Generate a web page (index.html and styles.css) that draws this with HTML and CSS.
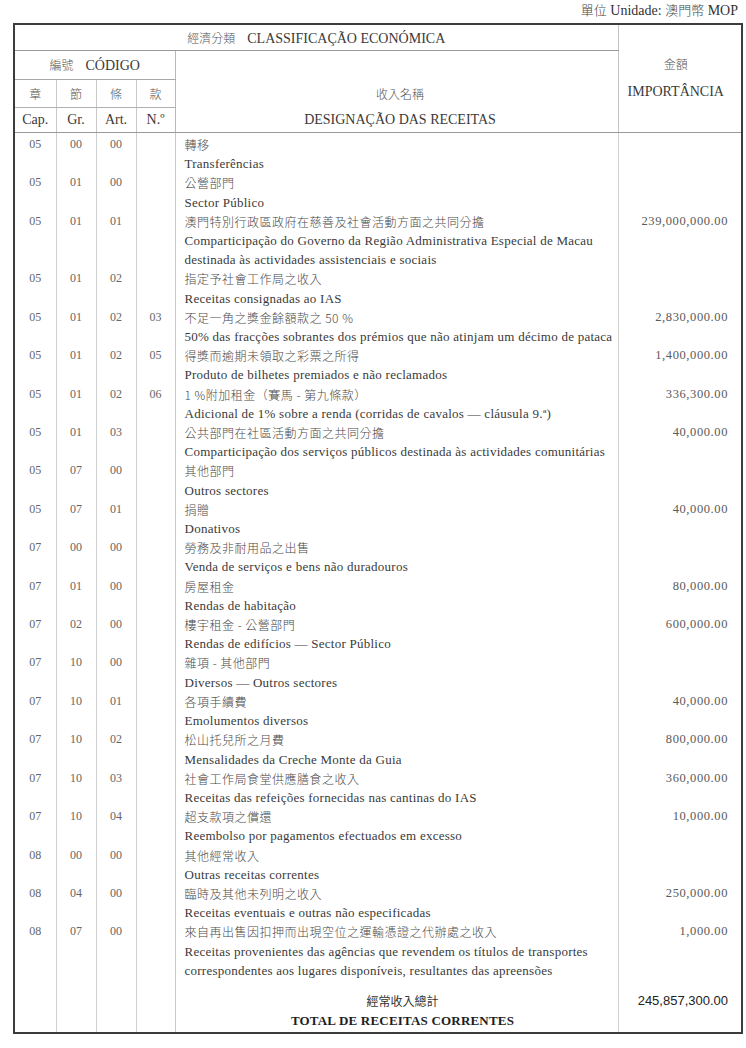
FILE: index.html
```html
<!DOCTYPE html>
<html lang="zh-Hant">
<head>
<meta charset="utf-8">
<title>Classificação Económica</title>
<link rel="stylesheet" href="styles.css">
</head>
<body>
<div class="page">
  <div class="unit"><span class="zh">單位</span> Unidade: <span class="zh">澳門幣</span> MOP</div>
  <table class="sheet">
    <colgroup>
      <col class="w-cap"><col class="w-gr"><col class="w-art"><col class="w-no"><col class="w-desc"><col class="w-amt">
    </colgroup>
    <thead>
      <tr class="h1">
        <th colspan="5" class="hd-class"><span class="zh">經濟分類</span><span class="gap"></span>CLASSIFICAÇÃO ECONÓMICA</th>
        <th rowspan="4" class="hd-amt"><div class="zh">金額</div><div class="hd-amt-pt">IMPORTÂNCIA</div></th>
      </tr>
      <tr class="h2">
        <th colspan="4" class="hd-code"><span class="zh">編號</span><span class="gap"></span>CÓDIGO</th>
        <th class="hd-desc hd-desc-top"></th>
      </tr>
      <tr class="h3">
        <th class="hd-sub zh">章</th><th class="hd-sub zh">節</th><th class="hd-sub zh">條</th><th class="hd-sub zh">款</th>
        <th class="hd-desc hd-desc-mid zh">收入名稱</th>
      </tr>
      <tr class="h4">
        <th class="hd-sub">Cap.</th><th class="hd-sub">Gr.</th><th class="hd-sub">Art.</th><th class="hd-sub">N.º</th>
        <th class="hd-desc hd-desc-bot">DESIGNAÇÃO DAS RECEITAS</th>
      </tr>
    </thead>
    <tbody>
      <tr class="ln first"><td class="cd">05</td><td class="cd">00</td><td class="cd">00</td><td class="cd"></td><td class="ds zh">轉移</td><td class="am"></td></tr>
      <tr class="ln"><td class="cd"></td><td class="cd"></td><td class="cd"></td><td class="cd"></td><td class="ds">Transferências</td><td class="am"></td></tr>
      <tr class="ln"><td class="cd">05</td><td class="cd">01</td><td class="cd">00</td><td class="cd"></td><td class="ds zh">公營部門</td><td class="am"></td></tr>
      <tr class="ln"><td class="cd"></td><td class="cd"></td><td class="cd"></td><td class="cd"></td><td class="ds">Sector Público</td><td class="am"></td></tr>
      <tr class="ln"><td class="cd">05</td><td class="cd">01</td><td class="cd">01</td><td class="cd"></td><td class="ds zh">澳門特別行政區政府在慈善及社會活動方面之共同分擔</td><td class="am">239,000,000.00</td></tr>
      <tr class="ln"><td class="cd"></td><td class="cd"></td><td class="cd"></td><td class="cd"></td><td class="ds">Comparticipação do Governo da Região Administrativa Especial de Macau</td><td class="am"></td></tr>
      <tr class="ln"><td class="cd"></td><td class="cd"></td><td class="cd"></td><td class="cd"></td><td class="ds">destinada às actividades assistenciais e sociais</td><td class="am"></td></tr>
      <tr class="ln"><td class="cd">05</td><td class="cd">01</td><td class="cd">02</td><td class="cd"></td><td class="ds zh">指定予社會工作局之收入</td><td class="am"></td></tr>
      <tr class="ln"><td class="cd"></td><td class="cd"></td><td class="cd"></td><td class="cd"></td><td class="ds">Receitas consignadas ao IAS</td><td class="am"></td></tr>
      <tr class="ln"><td class="cd">05</td><td class="cd">01</td><td class="cd">02</td><td class="cd">03</td><td class="ds zh">不足一角之獎金餘額款之 50 %</td><td class="am">2,830,000.00</td></tr>
      <tr class="ln"><td class="cd"></td><td class="cd"></td><td class="cd"></td><td class="cd"></td><td class="ds">50% das fracções sobrantes dos prémios que não atinjam um décimo de pataca</td><td class="am"></td></tr>
      <tr class="ln"><td class="cd">05</td><td class="cd">01</td><td class="cd">02</td><td class="cd">05</td><td class="ds zh">得獎而逾期未領取之彩票之所得</td><td class="am">1,400,000.00</td></tr>
      <tr class="ln"><td class="cd"></td><td class="cd"></td><td class="cd"></td><td class="cd"></td><td class="ds">Produto de bilhetes premiados e não reclamados</td><td class="am"></td></tr>
      <tr class="ln"><td class="cd">05</td><td class="cd">01</td><td class="cd">02</td><td class="cd">06</td><td class="ds zh">1 %附加租金（賽馬 - 第九條款）</td><td class="am">336,300.00</td></tr>
      <tr class="ln"><td class="cd"></td><td class="cd"></td><td class="cd"></td><td class="cd"></td><td class="ds">Adicional de 1% sobre a renda (corridas de cavalos — cláusula 9.ª)</td><td class="am"></td></tr>
      <tr class="ln"><td class="cd">05</td><td class="cd">01</td><td class="cd">03</td><td class="cd"></td><td class="ds zh">公共部門在社區活動方面之共同分擔</td><td class="am">40,000.00</td></tr>
      <tr class="ln"><td class="cd"></td><td class="cd"></td><td class="cd"></td><td class="cd"></td><td class="ds">Comparticipação dos serviços públicos destinada às actividades comunitárias</td><td class="am"></td></tr>
      <tr class="ln"><td class="cd">05</td><td class="cd">07</td><td class="cd">00</td><td class="cd"></td><td class="ds zh">其他部門</td><td class="am"></td></tr>
      <tr class="ln"><td class="cd"></td><td class="cd"></td><td class="cd"></td><td class="cd"></td><td class="ds">Outros sectores</td><td class="am"></td></tr>
      <tr class="ln"><td class="cd">05</td><td class="cd">07</td><td class="cd">01</td><td class="cd"></td><td class="ds zh">捐贈</td><td class="am">40,000.00</td></tr>
      <tr class="ln"><td class="cd"></td><td class="cd"></td><td class="cd"></td><td class="cd"></td><td class="ds">Donativos</td><td class="am"></td></tr>
      <tr class="ln"><td class="cd">07</td><td class="cd">00</td><td class="cd">00</td><td class="cd"></td><td class="ds zh">勞務及非耐用品之出售</td><td class="am"></td></tr>
      <tr class="ln"><td class="cd"></td><td class="cd"></td><td class="cd"></td><td class="cd"></td><td class="ds">Venda de serviços e bens não duradouros</td><td class="am"></td></tr>
      <tr class="ln"><td class="cd">07</td><td class="cd">01</td><td class="cd">00</td><td class="cd"></td><td class="ds zh">房屋租金</td><td class="am">80,000.00</td></tr>
      <tr class="ln"><td class="cd"></td><td class="cd"></td><td class="cd"></td><td class="cd"></td><td class="ds">Rendas de habitação</td><td class="am"></td></tr>
      <tr class="ln"><td class="cd">07</td><td class="cd">02</td><td class="cd">00</td><td class="cd"></td><td class="ds zh">樓宇租金 - 公營部門</td><td class="am">600,000.00</td></tr>
      <tr class="ln"><td class="cd"></td><td class="cd"></td><td class="cd"></td><td class="cd"></td><td class="ds">Rendas de edifícios — Sector Público</td><td class="am"></td></tr>
      <tr class="ln"><td class="cd">07</td><td class="cd">10</td><td class="cd">00</td><td class="cd"></td><td class="ds zh">雜項 - 其他部門</td><td class="am"></td></tr>
      <tr class="ln"><td class="cd"></td><td class="cd"></td><td class="cd"></td><td class="cd"></td><td class="ds">Diversos — Outros sectores</td><td class="am"></td></tr>
      <tr class="ln"><td class="cd">07</td><td class="cd">10</td><td class="cd">01</td><td class="cd"></td><td class="ds zh">各項手續費</td><td class="am">40,000.00</td></tr>
      <tr class="ln"><td class="cd"></td><td class="cd"></td><td class="cd"></td><td class="cd"></td><td class="ds">Emolumentos diversos</td><td class="am"></td></tr>
      <tr class="ln"><td class="cd">07</td><td class="cd">10</td><td class="cd">02</td><td class="cd"></td><td class="ds zh">松山托兒所之月費</td><td class="am">800,000.00</td></tr>
      <tr class="ln"><td class="cd"></td><td class="cd"></td><td class="cd"></td><td class="cd"></td><td class="ds">Mensalidades da Creche Monte da Guia</td><td class="am"></td></tr>
      <tr class="ln"><td class="cd">07</td><td class="cd">10</td><td class="cd">03</td><td class="cd"></td><td class="ds zh">社會工作局食堂供應膳食之收入</td><td class="am">360,000.00</td></tr>
      <tr class="ln"><td class="cd"></td><td class="cd"></td><td class="cd"></td><td class="cd"></td><td class="ds">Receitas das refeições fornecidas nas cantinas do IAS</td><td class="am"></td></tr>
      <tr class="ln"><td class="cd">07</td><td class="cd">10</td><td class="cd">04</td><td class="cd"></td><td class="ds zh">超支款項之償還</td><td class="am">10,000.00</td></tr>
      <tr class="ln"><td class="cd"></td><td class="cd"></td><td class="cd"></td><td class="cd"></td><td class="ds">Reembolso por pagamentos efectuados em excesso</td><td class="am"></td></tr>
      <tr class="ln"><td class="cd">08</td><td class="cd">00</td><td class="cd">00</td><td class="cd"></td><td class="ds zh">其他經常收入</td><td class="am"></td></tr>
      <tr class="ln"><td class="cd"></td><td class="cd"></td><td class="cd"></td><td class="cd"></td><td class="ds">Outras receitas correntes</td><td class="am"></td></tr>
      <tr class="ln"><td class="cd">08</td><td class="cd">04</td><td class="cd">00</td><td class="cd"></td><td class="ds zh">臨時及其他未列明之收入</td><td class="am">250,000.00</td></tr>
      <tr class="ln"><td class="cd"></td><td class="cd"></td><td class="cd"></td><td class="cd"></td><td class="ds">Receitas eventuais e outras não especificadas</td><td class="am"></td></tr>
      <tr class="ln"><td class="cd">08</td><td class="cd">07</td><td class="cd">00</td><td class="cd"></td><td class="ds zh">來自再出售因扣押而出現空位之運輸憑證之代辦處之收入</td><td class="am">1,000.00</td></tr>
      <tr class="ln"><td class="cd"></td><td class="cd"></td><td class="cd"></td><td class="cd"></td><td class="ds">Receitas provenientes das agências que revendem os títulos de transportes</td><td class="am"></td></tr>
      <tr class="ln"><td class="cd"></td><td class="cd"></td><td class="cd"></td><td class="cd"></td><td class="ds">correspondentes aos lugares disponíveis, resultantes das apreensões</td><td class="am"></td></tr>
      <tr class="total">
        <td class="cd"></td><td class="cd"></td><td class="cd"></td><td class="cd"></td>
        <td class="tot-desc"><div class="zh">經常收入總計</div><div class="tot-pt">TOTAL DE RECEITAS CORRENTES</div></td>
        <td class="tot-amt">245,857,300.00</td>
      </tr>
    </tbody>
  </table>
</div>
</body>
</html>
```

FILE: styles.css
```css
html, body {
  margin: 0;
  padding: 0;
  background: #ffffff;
}

body {
  font-family: "Liberation Serif", "Noto Sans CJK TC", serif;
  color: #333;
}

.page {
  padding: 0 4px 0 13px;
}

.unit {
  height: 23px;
  line-height: 19px;
  text-align: right;
  font-size: 14px;
  color: #333;
  padding-right: 4px;
}

.zh {
  font-family: "Noto Sans CJK TC", sans-serif;
}

.unit .zh {
  font-size: 13px;
  font-weight: 300;
  color: #444;
}

.sheet {
  width: 729px;
  border-collapse: collapse;
  table-layout: fixed;
  border: 2px solid #3c3c3c;
}

.w-cap { width: 42px; }
.w-gr { width: 40px; }
.w-art { width: 40px; }
.w-no { width: 39px; }
.w-desc { width: 443px; }
.w-amt { width: 124px; }

th {
  font-weight: normal;
  padding: 0;
  color: #3a3a3a;
  font-size: 14px;
}

.gap {
  display: inline-block;
  width: 12px;
}

th .zh,
th.zh {
  font-size: 12px;
  color: #555;
  font-weight: 300;
}

.h1 th { height: 25px; }
.h2 th { height: 28px; }
.h3 th { height: 27px; }
.h4 th { height: 24px; }

.hd-class {
  border-bottom: 1px solid #9a9a9a;
  text-align: center;
}

.hd-amt {
  border-left: 1px solid #c4c4c4;
  border-bottom: 1px solid #9a9a9a;
  vertical-align: top;
  text-align: center;
  padding-top: 29px;
  padding-right: 8px;
}

.hd-amt .zh {
  line-height: 20px;
}

.hd-amt-pt {
  line-height: 20px;
  margin-top: 8px;
}

.hd-code {
  border-bottom: 1px solid #a8a8a8;
  text-align: center;
}

.hd-sub {
  text-align: center;
  border-left: 1px solid #c8c8c8;
  border-bottom: 1px solid #b0b0b0;
  font-size: 14px;
}

.hd-sub:first-child {
  border-left: none;
}

.h4 .hd-sub {
  border-bottom: 1px solid #9a9a9a;
}

.hd-desc {
  border-left: 1px solid #b8b8b8;
  text-align: center;
  padding-left: 7px;
}

.hd-desc-bot {
  border-bottom: 1px solid #9a9a9a;
}

.ln td {
  height: 19.2px;
  line-height: 19.2px;
  padding: 0;
  white-space: nowrap;
}

.ln.first td {
  padding-top: 2px;
}

td.cd {
  text-align: center;
  font-size: 12px;
  color: #666;
  border-left: 1px solid #d0d0d0;
  vertical-align: top;
}

td.cd:first-child {
  border-left: none;
}

td.ds {
  padding-left: 9px;
  font-size: 13px;
  letter-spacing: 0.25px;
  color: #3a3a3a;
  border-left: 1px solid #c8c8c8;
  vertical-align: top;
}

td.ds.zh {
  font-size: 12px;
  letter-spacing: 0.5px;
  color: #4a4a4a;
  font-weight: 300;
}

td.am {
  text-align: right;
  padding-right: 13px;
  font-size: 12.5px;
  letter-spacing: 0.6px;
  color: #5a5a5a;
  border-left: 1px solid #d0d0d0;
  vertical-align: top;
}

.total td {
  padding: 0;
  vertical-align: top;
}

.total td.cd {
  height: 50px;
}

.tot-desc {
  border-left: 1px solid #c8c8c8;
  text-align: center;
  padding: 11px 0 1px 12px !important;
}

.tot-desc .zh {
  font-size: 12px;
  line-height: 20px;
  color: #333;
}

.tot-pt {
  font-size: 13px;
  font-weight: bold;
  line-height: 20px;
  color: #1e1e1e;
  letter-spacing: 0.2px;
}

.tot-amt {
  border-left: 1px solid #d0d0d0;
  text-align: right;
  padding: 11px 13px 0 0 !important;
  line-height: 20px;
  font-family: "Liberation Sans", Arial, sans-serif;
  font-size: 13px;
  color: #222;
}
```
